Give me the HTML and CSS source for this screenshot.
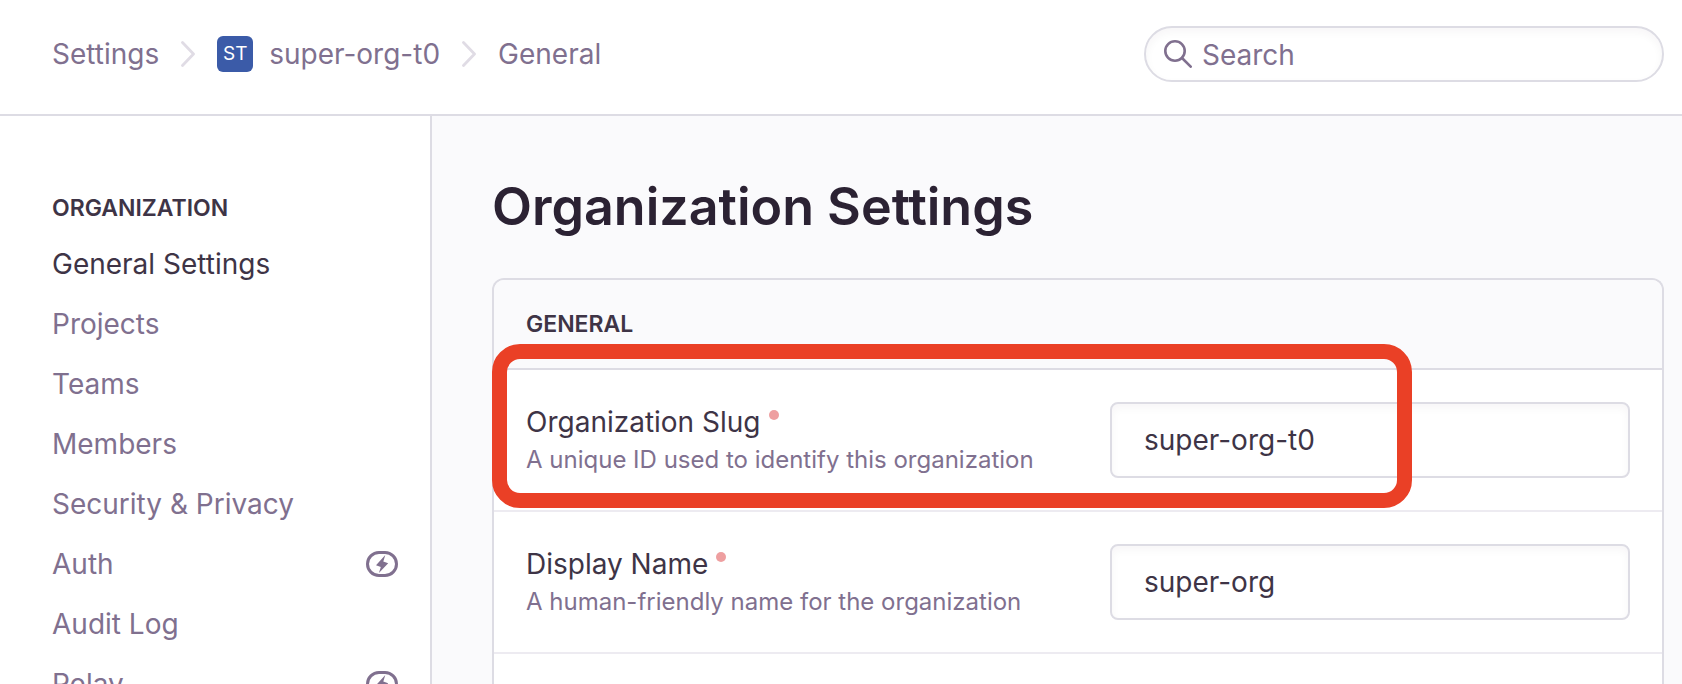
FILE: index.html
```
<!DOCTYPE html>
<html lang="en">
<head>
<meta charset="utf-8">
<meta name="viewport" content="width=device-width, initial-scale=1">
<title>Organization Settings</title>
<link rel="stylesheet" href="styles.css">
</head>
<body>
<svg class="sprite" aria-hidden="true">
  <symbol id="chevron" viewBox="0 0 14 26"><path d="M1.5 1.5 12.5 13 1.5 24.5" fill="none" stroke="currentColor" stroke-width="2.800" stroke-linecap="round" stroke-linejoin="round"/></symbol>
  <symbol id="bolt" viewBox="0 0 32 26"><rect x="1.5" y="1.5" width="29" height="23" rx="11.5" fill="none" stroke="currentColor" stroke-width="3"/><path d="M19.3 4 10 14.2l4.8 1.7L12.900 22 22.200 12.300l-4.900-1.800Z" fill="currentColor"/></symbol>
</svg>
<div class="page">
  <header class="topbar">
    <nav class="crumbs" aria-label="Breadcrumb">
      <a class="crumb" href="#">Settings</a>
      <svg class="chevron" aria-hidden="true"><use href="#chevron"/></svg>
      <a class="crumb" href="#"><span class="avatar">ST</span>super-org-t0</a>
      <svg class="chevron" aria-hidden="true"><use href="#chevron"/></svg>
      <a class="crumb" href="#">General</a>
    </nav>
    <label class="search">
      <svg class="search-icon" viewBox="0 0 28 28" aria-hidden="true"><circle cx="11" cy="11" r="9.700" fill="none" stroke="currentColor" stroke-width="2.600"/><path d="M18 18l8.700 8.700" stroke="currentColor" stroke-width="2.600" stroke-linecap="round"/></svg>
      <input class="search-input" type="text" placeholder="Search" aria-label="Search">
    </label>
  </header>
  <div class="body">
    <aside class="sidebar">
      <h2 class="heading">ORGANIZATION</h2>
      <nav class="menu" aria-label="Organization">
        <a class="item active" href="#">General Settings</a>
        <a class="item" href="#">Projects</a>
        <a class="item" href="#">Teams</a>
        <a class="item" href="#">Members</a>
        <a class="item" href="#">Security &amp; Privacy</a>
        <a class="item" href="#">Auth<svg class="bolt" aria-hidden="true"><use href="#bolt"/></svg></a>
        <a class="item" href="#">Audit Log</a>
        <a class="item" href="#">Relay<svg class="bolt" aria-hidden="true"><use href="#bolt"/></svg></a>
      </nav>
    </aside>
    <main class="content">
      <h1 class="title">Organization Settings</h1>
      <section class="panel">
        <h2 class="heading panel-head">GENERAL</h2>
        <div class="row">
          <div class="info">
            <label class="label" for="slug">Organization Slug<span class="dot"></span></label>
            <p class="help">A unique ID used to identify this organization</p>
          </div>
          <input class="field" id="slug" type="text" value="super-org-t0">
          <div class="highlight"></div>
        </div>
        <div class="row">
          <div class="info">
            <label class="label" for="name">Display Name<span class="dot"></span></label>
            <p class="help">A human-friendly name for the organization</p>
          </div>
          <input class="field" id="name" type="text" value="super-org">
        </div>
      </section>
    </main>
  </div>
</div>
</body>
</html>
```
FILE: styles.css
```
* { box-sizing: border-box; }

body {
  margin: 0;
  font-family: Inter, Roboto, sans-serif;
  font-size: 28px;
  line-height: 36px;
  color: #3e3446;
  background: #fff;
}

a { color: inherit; text-decoration: none; }
h1, h2, p { margin: 0; }
input { font: inherit; color: inherit; }

.sprite { display: none; }

.page {
  display: flex;
  flex-direction: column;
  height: 100vh;
  overflow: hidden;
}

.topbar {
  display: flex;
  flex: none;
  align-items: center;
  justify-content: space-between;
  padding: 26px 18px 32px 52px;
  border-bottom: 2px solid #dddce4;
  color: #80708f;
}

.crumbs { display: flex; align-items: center; gap: 22px; }
.crumb { display: flex; align-items: center; gap: 16px; }
.chevron { width: 14px; height: 26px; color: #e0dce5; }

.avatar {
  width: 36px;
  height: 36px;
  border-radius: 6px;
  background: #3b5ba8;
  color: #fff;
  font-size: 19px;
  text-align: center;
}

.search {
  display: flex;
  align-items: center;
  gap: 10px;
  width: 520px;
  height: 56px;
  padding: 0 18px;
  border: 2px solid #dddce4;
  border-radius: 28px;
  box-shadow: inset 0 4px 8px rgba(43, 34, 51, 0.04);
}

.search-icon { flex: none; width: 28px; height: 28px; }

.search-input {
  flex: 1;
  min-width: 0;
  padding: 2px 0 0;
  border: 0;
  outline: 0;
  background: transparent;
}

.search-input::placeholder { color: #80708f; opacity: 1; }

.body { display: flex; flex: 1; min-height: 0; }

.sidebar {
  flex: none;
  width: 432px;
  padding: 74px 32px 0 52px;
  border-right: 2px solid #dddce4;
}

.heading { font-size: 23px; font-weight: 600; line-height: 36px; }
.menu { padding-top: 8px; color: #80708f; }

.item {
  display: flex;
  align-items: center;
  justify-content: space-between;
  height: 60px;
}

.active { color: #3e3446; }
.bolt { width: 32px; height: 26px; }

.content {
  display: flex;
  flex: 1;
  flex-direction: column;
  min-width: 0;
  padding: 60px 18px 0 60px;
  background: #fafafc;
}

.title {
  color: #2b2233;
  font-size: 52px;
  font-weight: 600;
  line-height: 62px;
}

.panel {
  flex: 1;
  margin-top: 40px;
  border: 2px solid #dddce4;
  border-bottom: 0;
  border-radius: 12px 12px 0 0;
  background: #fff;
}

.panel-head {
  padding: 26px 32px;
  border-bottom: 2px solid #dddce4;
  border-radius: 10px 10px 0 0;
  background: #fafafc;
}

.row {
  position: relative;
  display: grid;
  grid-template-columns: 584fr 520fr;
  align-items: center;
  padding: 32px;
  border-bottom: 2px solid #edebf1;
}

.label { display: flex; align-items: center; gap: 8px; line-height: 40px; }

.dot {
  width: 10px;
  height: 10px;
  margin-bottom: 14px;
  border-radius: 50%;
  background: #ee9fa0;
}

.help { color: #80708f; font-size: 24px; white-space: nowrap; }

.field {
  width: 100%;
  height: 76px;
  padding: 0 32px;
  border: 2px solid #dddce4;
  border-radius: 8px;
  outline: 0;
  background: #fff;
  box-shadow: inset 0 4px 8px rgba(43, 34, 51, 0.04);
}

.highlight {
  position: absolute;
  top: -26px;
  right: 250px;
  bottom: 2px;
  left: -2px;
  border: 15px solid #ea4026;
  border-radius: 28px;
  pointer-events: none;
}
```
